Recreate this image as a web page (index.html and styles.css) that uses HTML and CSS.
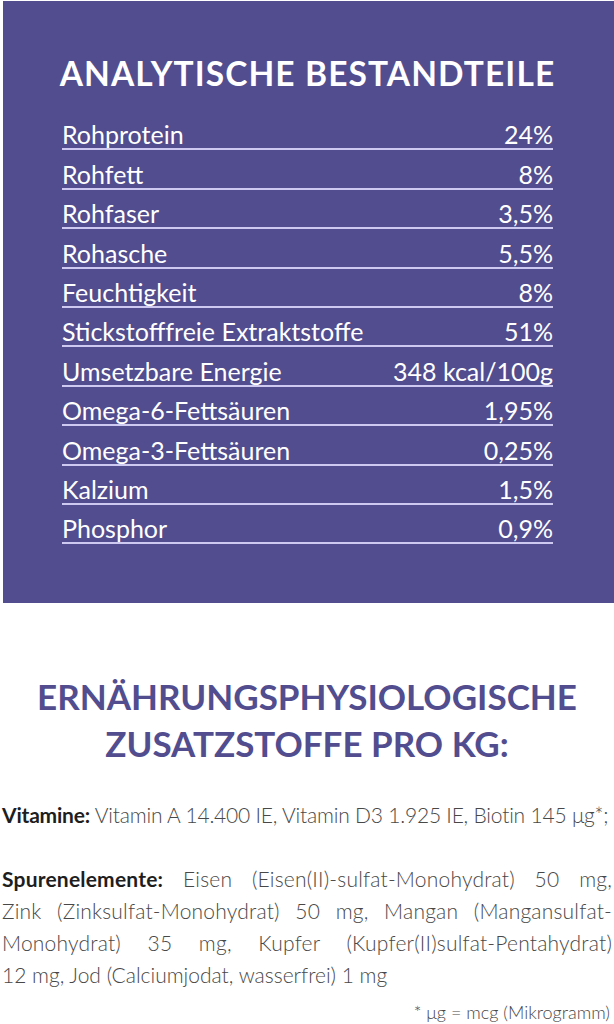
FILE: index.html
```html
<!DOCTYPE html>
<html lang="de">
<head>
<meta charset="utf-8">
<title>Analytische Bestandteile</title>
<link rel="stylesheet" href="styles.css">
</head>
<body>
<section class="panel">
  <h2 class="panel-title">ANALYTISCHE BESTANDTEILE</h2>
  <ul class="rows">
    <li class="row"><span>Rohprotein</span><span>24%</span></li>
    <li class="row"><span>Rohfett</span><span>8%</span></li>
    <li class="row"><span>Rohfaser</span><span>3,5%</span></li>
    <li class="row"><span>Rohasche</span><span>5,5%</span></li>
    <li class="row"><span>Feuchtigkeit</span><span>8%</span></li>
    <li class="row"><span>Stickstofffreie Extraktstoffe</span><span>51%</span></li>
    <li class="row"><span>Umsetzbare Energie</span><span>348 kcal/100g</span></li>
    <li class="row"><span>Omega-6-Fettsäuren</span><span>1,95%</span></li>
    <li class="row"><span>Omega-3-Fettsäuren</span><span>0,25%</span></li>
    <li class="row"><span>Kalzium</span><span>1,5%</span></li>
    <li class="row"><span>Phosphor</span><span>0,9%</span></li>
  </ul>
</section>
<section class="additives">
  <h2 class="add-title">ERNÄHRUNGSPHYSIOLOGISCHE<br>ZUSATZSTOFFE PRO KG:</h2>
  <p class="vit"><strong>Vitamine:</strong> Vitamin A 14.400 IE, Vitamin D3 1.925 IE, Biotin 145 μg*;</p>
  <p class="trace">
    <span class="line"><strong>Spurenelemente:</strong> Eisen (Eisen(II)-sulfat-Monohydrat) 50 mg,</span>
    <span class="line">Zink (Zinksulfat-Monohydrat) 50 mg, Mangan (Mangansulfat-</span>
    <span class="line">Monohydrat) 35 mg, Kupfer (Kupfer(II)sulfat-Pentahydrat)</span>
    <span class="line last">12 mg, Jod (Calciumjodat, wasserfrei) 1 mg</span>
  </p>
  <p class="note">* μg = mcg (Mikrogramm)</p>
</section>
</body>
</html>
```

FILE: styles.css
```css
html, body {
  margin: 0;
  padding: 0;
  background: #ffffff;
}
body {
  font-family: "Lato", "Noto Sans", sans-serif;
  width: 614px;
}
.panel {
  margin: 1px 0 0 3px;
  background: #524d8e;
  padding: 52px 61px 58px 59px;
  height: 602px;
  box-sizing: border-box;
  color: #ffffff;
}
.panel-title {
  margin: 0 -10px;
  font-size: 33.5px;
  font-weight: 700;
  line-height: 40px;
  letter-spacing: 1.1px;
  text-align: center;
  white-space: nowrap;
  height: 58px;
}
.rows {
  list-style: none;
  margin: 0;
  padding: 0;
}
.row {
  display: flex;
  justify-content: space-between;
  align-items: flex-end;
  height: 39.4px;
  box-sizing: border-box;
  border-bottom: 2px solid #cdc9f0;
  font-size: 25px;
  line-height: 27px;
}
.additives {
  padding: 70px 2px 0 2px;
  color: #484848;
}
.add-title {
  margin: 0 0 32px;
  color: #524d8e;
  font-size: 35px;
  font-weight: 700;
  line-height: 47px;
  text-align: center;
}
.vit {
  margin: 0 0 32px;
  font-size: 21px;
  font-weight: 300;
  line-height: 32px;
  letter-spacing: -0.2px;
}
.trace {
  margin: 0;
  font-size: 21px;
  font-weight: 300;
  line-height: 32px;
}
.line {
  display: block;
  text-align: justify;
  text-align-last: justify;
  white-space: nowrap;
  letter-spacing: 0.2px;
}
.line.last {
  text-align: left;
  text-align-last: left;
  letter-spacing: 0;
}
strong {
  color: #1e1e1e;
  font-weight: 700;
}
.note {
  margin: 7px 2px 0 0;
  text-align: right;
  font-size: 18px;
  font-weight: 300;
  line-height: 28px;
}
```
